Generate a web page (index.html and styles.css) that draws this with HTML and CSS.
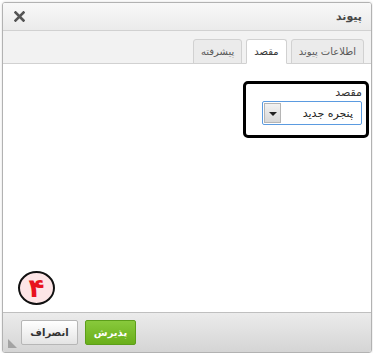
FILE: index.html
```html
<!DOCTYPE html>
<html lang="fa" dir="rtl">
<head>
	<meta charset="UTF-8">
	<title>پیوند</title>
	<link rel="stylesheet" href="styles.css">
</head>
<body>
	<div class="dialog">
		<div class="title">
			<span class="title-text">پیوند</span>
			<svg class="close" width="11" height="11" viewBox="0 0 11 11"><path d="M1.5 1.5 L9.5 9.5 M9.5 1.5 L1.5 9.5" stroke="#555" stroke-width="2.6" stroke-linecap="square"/></svg>
		</div>
		<div class="tabs">
			<div class="tab">اطلاعات پیوند</div>
			<div class="tab active">مقصد</div>
			<div class="tab">پیشرفته</div>
		</div>
		<div class="content">
			<div class="mark">
				<div class="label">مقصد</div>
				<div class="select">
					<span class="value">پنجره جدید</span>
					<span class="arrow"></span>
				</div>
			</div>
			<div class="step">۴</div>
		</div>
		<div class="footer">
			<span class="btn ok">پذیرش</span>
			<span class="btn">انصراف</span>
			<span class="resize"></span>
		</div>
	</div>
</body>
</html>
```

FILE: styles.css
```css
*{
	margin: 0;
	padding: 0;
	box-sizing: border-box;
}
body{
	background: #fff;
	font-family: "DejaVu Sans", Tahoma, sans-serif;
	font-size: 11px;
	color: #333;
}
.dialog{
	margin: 2px 1px 0 2px;
	height: 351px;
	border: 1px solid #b2b2b2;
	border-radius: 3px;
	box-shadow: 0 0 3px rgba(0,0,0,0.15);
	display: flex;
	flex-direction: column;
	overflow: hidden;
}
.title{
	height: 28px;
	flex: none;
	display: flex;
	align-items: center;
	justify-content: space-between;
	padding: 0 9px 0 11px;
	background: linear-gradient(#f8f8f8, #ebebeb);
	border-bottom: 1px solid #d1d1d1;
}
.title-text{
	font-weight: bold;
	font-size: 11px;
	color: #474747;
}
.close{
	display: block;
}
.tabs{
	height: 33px;
	flex: none;
	display: flex;
	align-items: flex-end;
	gap: 4px;
	padding: 0 7px 0 0;
	background: #f2f2f2;
	border-bottom: 1px solid #d1d1d1;
}
.tab{
	height: 25px;
	margin-bottom: -1px;
	padding: 0 7px;
	line-height: 23px;
	font-size: 10px;
	background: #ebebeb;
	border: 1px solid #d1d1d1;
	border-radius: 3px 3px 0 0;
	color: #595959;
}
.tab.active{
	background: #fff;
	border-bottom-color: #fff;
	color: #383838;
}
.content{
	flex: 1;
	position: relative;
	background: #fff;
	padding: 17px 2px 0 0;
}
.mark{
	width: 126px;
	height: 57px;
	border: 3px solid #000;
	border-radius: 5px;
	padding: 3px 4px 0 16px;
}
.label{
	font-size: 11px;
	color: #333;
	line-height: 12px;
	margin-bottom: 2px;
}
.select{
	height: 24px;
	display: flex;
	align-items: center;
	justify-content: space-between;
	border: 1px solid #5b9be0;
	border-radius: 2px;
	padding: 0 8px 0 1px;
}
.value{
	color: #222;
}
.arrow{
	width: 17px;
	height: 20px;
	background: linear-gradient(#f2f2f2, #d8d8d8);
	border: 1px solid #b5b5b5;
	position: relative;
}
.arrow::after{
	content: "";
	position: absolute;
	left: 4px;
	top: 8px;
	border-left: 4px solid transparent;
	border-right: 4px solid transparent;
	border-top: 4px solid #222;
}
.step{
	position: absolute;
	left: 15px;
	top: 207px;
	width: 37px;
	height: 34px;
	border: 2px solid #111;
	border-radius: 50%;
	background: #fde5e6;
	color: #e8121e;
	font-size: 26px;
	font-weight: bold;
	line-height: 30px;
	text-align: center;
}
.footer{
	height: 40px;
	flex: none;
	display: flex;
	align-items: center;
	gap: 7px;
	padding: 0 235px 0 0;
	position: relative;
	background: linear-gradient(#ebebeb, #d5d5d5);
	border-top: 1px solid #bfbfbf;
}
.btn{
	height: 25px;
	width: 57px;
	text-align: center;
	line-height: 23px;
	font-weight: bold;
	font-size: 10px;
	border: 1px solid #b6b6b6;
	border-radius: 2px;
	background: linear-gradient(#fff, #e4e4e4);
	color: #333;
}
.btn.ok{
	width: 51px;
	border-color: #5c9e1a;
	background: linear-gradient(#88c93c, #6aaf1a);
	color: #fff;
}
.resize{
	position: absolute;
	left: 5px;
	bottom: 4px;
	width: 0;
	height: 0;
	border-left: 9px solid transparent;
	border-bottom: 9px solid #a3a3a3;
	transform: scaleX(-1);
}
```
